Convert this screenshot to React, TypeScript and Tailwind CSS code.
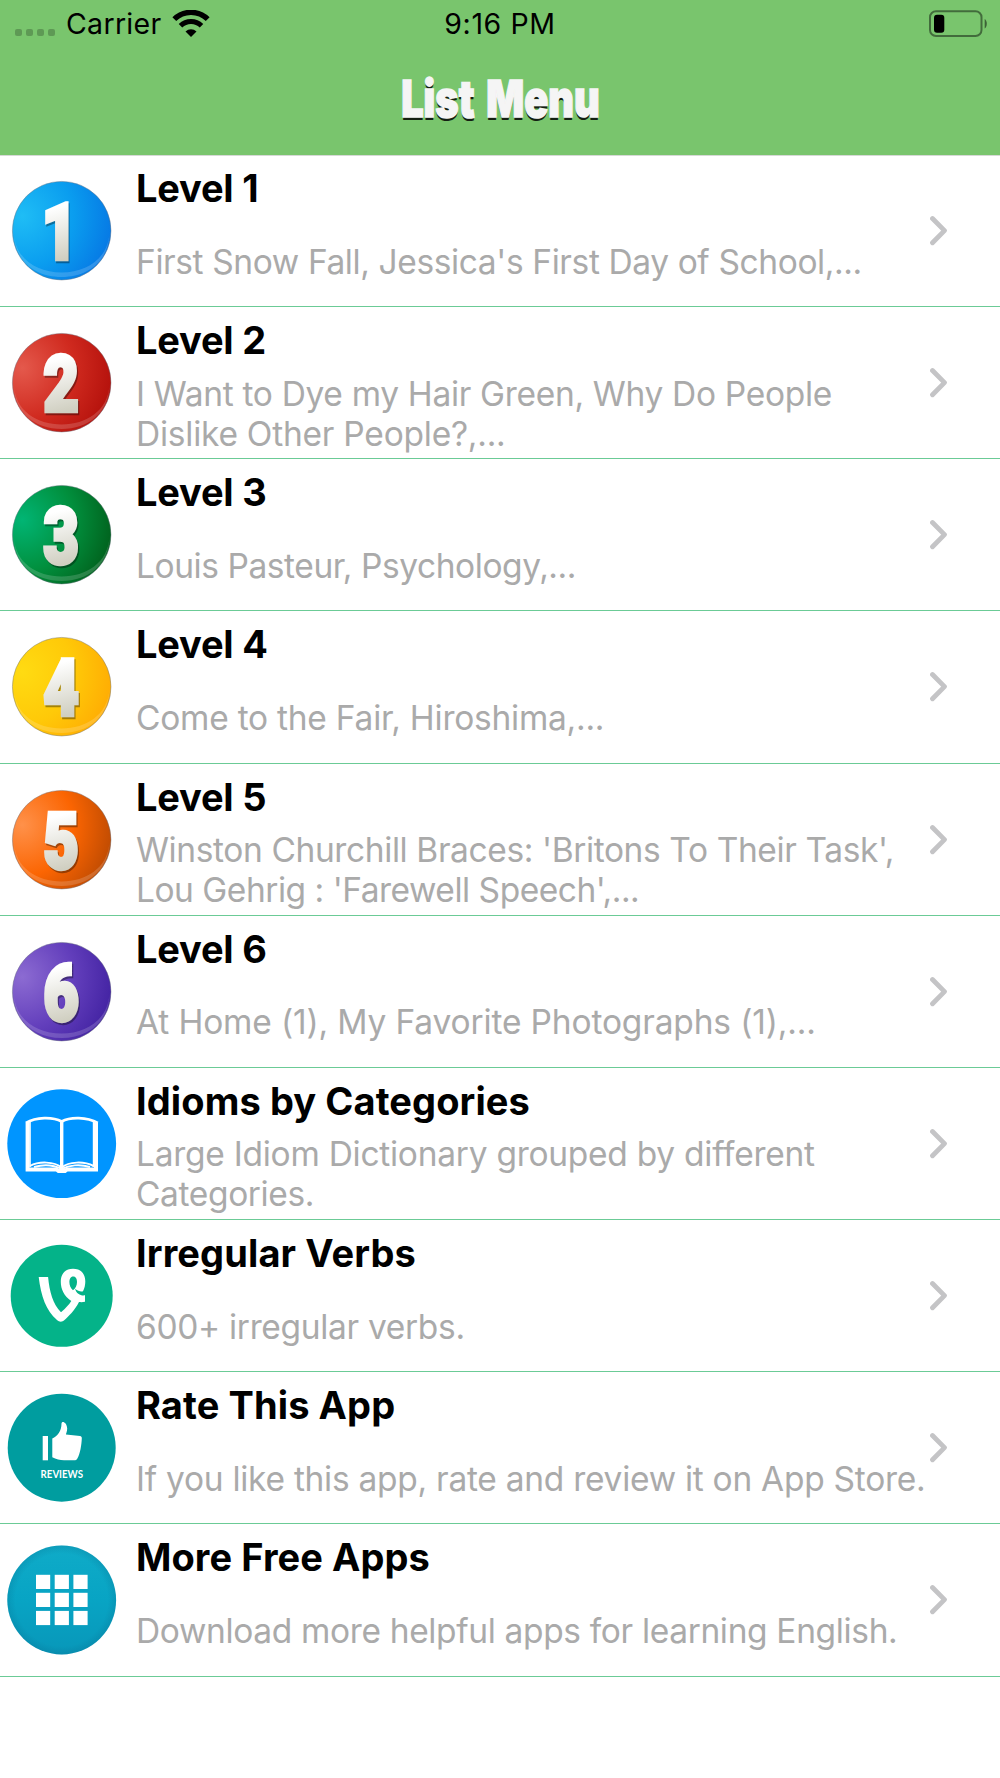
import React from "react";

type Row = {
  title: string;
  titleClass?: string;
  lines: { text: string; className?: string }[];
  icon: React.ReactNode;
};

type BallProps = {
  digit: string;
  from: string;
  mid: string;
  to: string;
  x?: number;
  scale?: string;
};

// Glossy round badge with a tall condensed number
function Ball({ digit, from, mid, to, x = 61.2, scale = "0.75 0.96" }: BallProps) {
  const id = `ball-${digit}`;
  return (
    <svg viewBox="0 0 123 152" className="h-[152px] w-[123px]">
      <defs>
        <radialGradient id={id} cx="0.1" cy="0.35" r="0.95">
          <stop offset="0" stopColor={from} />
          <stop offset="0.55" stopColor={mid} />
          <stop offset="1" stopColor={to} />
        </radialGradient>
        <linearGradient id={`${id}-text`} gradientUnits="userSpaceOnUse" x1="-6" y1="-60" x2="6" y2="0">
          <stop offset="0.1" stopColor="#ffffff" />
          <stop offset="1" stopColor="#d0cfc1" />
        </linearGradient>
      </defs>
      <circle cx="61.700" cy="75.700" r="49.300" fill={`url(#${id})`} stroke="#6b7280" strokeOpacity="0.55" strokeWidth="0.800" />
      <path
        d="M14 78 C15 104 37 117.500 61.700 117.500 C86 117.500 108 104 109.400 78 C109 106 88 122 61.700 122 C35 122 14.500 106 14 78Z"
        fill="#ffffff"
        fillOpacity="0.17"
      />
      <g
        transform={`translate(${x} 104.300) scale(${scale})`}
        textAnchor="middle"
        strokeWidth="4.600"
        strokeLinejoin="miter"
        className="font-['Roboto'] text-[81px] font-black"
      >
        <text x="1.500" y="1.500" fill="#000000" stroke="#000000" opacity="0.35">
          {digit}
        </text>
        <text x="0" y="0" fill={`url(#${id}-text)`} stroke={`url(#${id}-text)`}>
          {digit}
        </text>
      </g>
    </svg>
  );
}

function BookIcon() {
  return (
    <svg viewBox="0 0 123 152" className="h-[152px] w-[123px]">
      <circle cx="61.700" cy="75.700" r="54.400" fill="#0095ff" />
      <g fill="none" stroke="#ffffff">
        <path d="M27.600 54.500 V101.500 H56.500 L58.500 103 H65 L67 101.500 H96 V54.500" strokeWidth="4" />
        <path d="M26 55 C36 48.800 53 48.800 61.700 53.500 C70 48.800 87 48.800 97.700 55" strokeWidth="2.800" />
        <path d="M30 53 V99 M93.600 53 V99" strokeWidth="1.600" />
        <path d="M61.700 53 V100" strokeWidth="3.400" />
        <path d="M30 98 C39 93 54 93.500 61.700 99.500 C69 93.500 84 93 93.500 98" strokeWidth="2" />
        <path d="M34 99 C44 96 54 97 61.700 101 C69 97 80 96 90 99" strokeWidth="2" />
      </g>
    </svg>
  );
}

function VerbIcon() {
  return (
    <svg viewBox="0 0 123 152" className="h-[152px] w-[123px]">
      <circle cx="61.700" cy="75.800" r="51" fill="#04b389" />
      <path
        fill="#ffffff"
        fillRule="evenodd"
        d="M38.700 57.100 L48.100 57 C49.500 72 53 84 61 92.300 C66 88 69 84.500 71.300 81 C64 76 60.800 69 60.800 62 C60.800 53.500 65.500 48.800 73 48.800 C81 48.800 85.300 54 85.300 61.500 C85.300 65 84.500 68.500 83 71.200 C80.500 71.800 78 71 75 68.700 C76.500 74 81 76 85 75.300 L85 81.800 C83 82.200 80.500 82.200 79 82 C75 90 68 97 64.500 100 C62 102.200 59.500 102.200 57 100 C46 91 41 76 38.700 57.100Z M73.200 56.500 C70.500 56.500 69.400 59 69.400 62 C69.400 65 70.500 68 73 70.300 C75.500 68.500 77 65.500 77 62 C77 59 76 56.500 73.200 56.500Z"
      />
    </svg>
  );
}

function ReviewIcon() {
  return (
    <svg viewBox="0 0 123 152" className="h-[152px] w-[123px]">
      <circle cx="61.700" cy="75.700" r="54" fill="#009d9f" />
      <rect x="42.700" y="64" width="5.300" height="24.300" fill="#ffffff" />
      <path
        fill="#ffffff"
        d="M52.300 66.500 C57.500 64 61.500 59.500 61.500 51.500 C61.500 48.500 66.800 49.500 67.200 56.500 C67.200 60 65.600 62 66 62.600 L80 63.900 C81.200 64 81.800 64.800 81.800 66 C81.600 73 80 82 77.500 86.300 C76.800 88 75.500 88.300 74 88.300 H64 C60 88.200 56 87 52.300 85.200Z"
      />
      <text
        x="61.800"
        y="105.500"
        textAnchor="middle"
        textLength="42.500"
        lengthAdjust="spacingAndGlyphs"
        className="font-['Lato'] text-[10.5px] font-bold"
        fill="#ffffff"
      >
        REVIEWS
      </text>
    </svg>
  );
}

function AppsIcon() {
  const cols = [36, 54.7, 73.4];
  const rows = [50.8, 68.8, 86.9];
  return (
    <svg viewBox="0 0 123 152" className="h-[152px] w-[123px]">
      <defs>
        <linearGradient id="apps" x1="0" y1="0" x2="0" y2="1">
          <stop offset="0" stopColor="#0fabc8" />
          <stop offset="0.5" stopColor="#08a4c4" />
          <stop offset="1" stopColor="#0897b9" />
        </linearGradient>
        <radialGradient id="apps-edge">
          <stop offset="0.85" stopColor="#065f80" stopOpacity="0" />
          <stop offset="1" stopColor="#065f80" stopOpacity="0.2" />
        </radialGradient>
      </defs>
      <circle cx="61.700" cy="76" r="54.400" fill="url(#apps)" />
      <circle cx="61.700" cy="76" r="54.400" fill="url(#apps-edge)" />
      {rows.map((y) => cols.map((x) => <rect key={`${x}-${y}`} x={x} y={y} width="14.200" height="14.200" fill="#ffffff" />))}
    </svg>
  );
}

const rows: Row[] = [
  {
    title: "Level 1",
    titleClass: "tracking-[-0.2px]",
    lines: [{ text: "First Snow Fall, Jessica's First Day of School,...", className: "tracking-[-0.39px]" }],
    icon: <Ball digit="1" from="#1fbdf5" mid="#0a9def" to="#0677e4" x={59.5} />,
  },
  {
    title: "Level 2",
    titleClass: "tracking-[-0.2px]",
    lines: [
      { text: "I Want to Dye my Hair Green, Why Do People", className: "tracking-[-0.32px]" },
      { text: "Dislike Other People?,...", className: "tracking-[-0.24px]" },
    ],
    icon: <Ball digit="2" from="#e4594c" mid="#d02a1f" to="#b3100b" />,
  },
  {
    title: "Level 3",
    titleClass: "tracking-[-0.2px]",
    lines: [{ text: "Louis Pasteur, Psychology,...", className: "tracking-[-0.43px]" }],
    icon: <Ball digit="3" from="#01b574" mid="#018f3d" to="#01601c" />,
  },
  {
    title: "Level 4",
    titleClass: "tracking-[-0.2px]",
    lines: [{ text: "Come to the Fair, Hiroshima,...", className: "tracking-[-0.24px]" }],
    icon: <Ball digit="4" from="#ffdb12" mid="#ffc908" to="#ffab03" />,
  },
  {
    title: "Level 5",
    titleClass: "tracking-[-0.2px]",
    lines: [
      { text: "Winston Churchill Braces: 'Britons To Their Task',", className: "tracking-[-0.39px]" },
      { text: "Lou Gehrig : 'Farewell Speech',...", className: "tracking-[-0.48px]" },
    ],
    icon: <Ball digit="5" from="#ff914a" mid="#fb6502" to="#bd4a02" />,
  },
  {
    title: "Level 6",
    titleClass: "tracking-[-0.2px]",
    lines: [{ text: "At Home (1), My Favorite Photographs (1),...", className: "tracking-[-0.15px]" }],
    icon: <Ball digit="6" from="#8c6bd2" mid="#633fbc" to="#4222a2" />,
  },
  {
    title: "Idioms by Categories",
    titleClass: "tracking-[0.1px]",
    lines: [
      { text: "Large Idiom Dictionary grouped by different", className: "tracking-[-0.26px]" },
      { text: "Categories.", className: "tracking-[-0.37px]" },
    ],
    icon: <BookIcon />,
  },
  {
    title: "Irregular Verbs",
    titleClass: "tracking-[0.12px]",
    lines: [{ text: "600+ irregular verbs.", className: "tracking-[-0.32px]" }],
    icon: <VerbIcon />,
  },
  {
    title: "Rate This App",
    titleClass: "tracking-[0.1px]",
    lines: [{ text: "If you like this app, rate and review it on App Store.", className: "tracking-[-0.27px]" }],
    icon: <ReviewIcon />,
  },
  {
    title: "More Free Apps",
    titleClass: "tracking-[0.08px]",
    lines: [{ text: "Download more helpful apps for learning English.", className: "tracking-[-0.35px]" }],
    icon: <AppsIcon />,
  },
];

function StatusBar() {
  return (
    <div className="grid h-[47px] grid-cols-3 items-center text-[28.5px] leading-[46px] text-black">
      <div className="flex items-center pl-[15px]">
        <div className="mt-[18px] flex gap-1">
          <span className="size-[7px] rounded-[2px] bg-black/22" />
          <span className="size-[7px] rounded-[2px] bg-black/22" />
          <span className="size-[7px] rounded-[2px] bg-black/22" />
          <span className="size-[7px] rounded-[2px] bg-black/22" />
        </div>
        <span className="ml-[11px] w-[97px] pt-px tracking-[0.3px] whitespace-nowrap">Carrier</span>
        <svg viewBox="0 0 38 28" className="ml-[9px] h-[28px] w-[38px]">
          <g fill="none" stroke="#000000">
            <path d="M2.300 9.200 A23.800 23.800 0 0 1 35.700 9.200" strokeWidth="5.400" />
            <path d="M8.500 15.700 A15 15 0 0 1 29.500 15.700" strokeWidth="5" />
          </g>
          <path d="M19 27 L13.500 21.400 A8 8 0 0 1 24.500 21.400Z" />
        </svg>
      </div>
      <div className="pt-px text-center tracking-[0.6px]">9:16 PM</div>
      <svg viewBox="0 0 60 28" className="mr-[11px] h-[28px] w-[60px] justify-self-end">
        <rect x="1" y="1.300" width="51.500" height="24.700" rx="6" fill="none" stroke="#000000" strokeOpacity="0.45" strokeWidth="2" />
        <rect x="5" y="4.700" width="10.300" height="18" rx="3" />
        <path d="M55.700 9 C58.500 10.500 58.500 17 55.700 18.500Z" fillOpacity="0.5" />
      </svg>
    </div>
  );
}

function ListRow({ row }: { row: Row }) {
  return (
    <li className="flex h-[152.17px] border-b border-[#6bcb96]">
      <div className="w-[136px] shrink-0">{row.icon}</div>
      <div className="w-[794px] shrink-0 pt-[9px] whitespace-nowrap">
        <h2 className="h-12 text-[38px] leading-[48px] font-bold text-black">
          <span className={row.titleClass}>{row.title}</span>
        </h2>
        <div className="mt-[9.5px] flex h-20 flex-col justify-center text-[33.5px] leading-[40px] text-[#aaaaaa]">
          {row.lines.map((line) => (
            <p key={line.text}>
              <span className={line.className}>{line.text}</span>
            </p>
          ))}
        </div>
      </div>
      <svg viewBox="0 0 20 152" className="h-[152px] w-5 shrink-0">
        <path d="M2.500 63.500 L14.500 75.600 L2.500 87.700" fill="none" stroke="#c4c4c6" strokeWidth="4.800" strokeLinecap="round" strokeLinejoin="round" />
      </svg>
    </li>
  );
}

export default function App() {
  return (
    <div className="h-[1778px] w-[1000px] overflow-hidden bg-white font-['Inter',sans-serif]">
      <header className="h-[155px] bg-[#79c56d] shadow-[0_1px_0_#d6d9d6]">
        <StatusBar />
        <h1 className="mt-[21px] text-center text-[50.5px] leading-[62px] font-black text-[#f5f5f5] [text-shadow:0_2.5px_0_#141f12]">
          <span className="inline-block origin-center scale-x-[0.785] whitespace-nowrap [word-spacing:5px] [-webkit-text-stroke:1.6px_#f5f5f5]">
            List Menu
          </span>
        </h1>
      </header>
      <ul>
        {rows.map((row) => (
          <ListRow key={row.title} row={row} />
        ))}
      </ul>
    </div>
  );
}
